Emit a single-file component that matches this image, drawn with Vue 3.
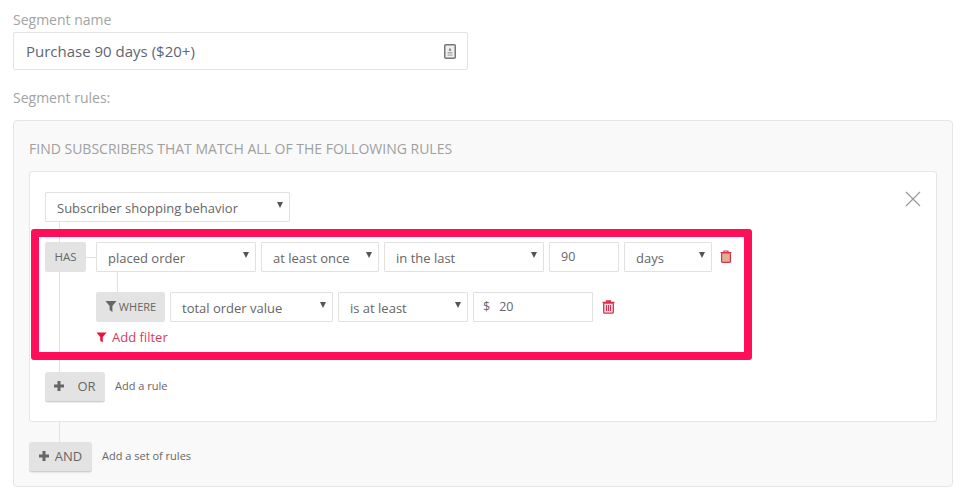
<script setup>
const ruleFields = [
  { label: 'placed order', w: 160 },
  { label: 'at least once', w: 118 },
  { label: 'in the last', w: 160 }
]
const filterFields = [
  { label: 'total order value', w: 163 },
  { label: 'is at least', w: 130 }
]
</script>

<template>
  <div class="page">
    <label class="field-label">Segment name</label>
    <div class="name-input">
      <span>Purchase 90 days ($20+)</span>
      <svg class="name-icon" width="12" height="15" viewBox="0 0 12 15">
        <rect x="0.75" y="0.75" width="10.5" height="13.5" rx="1" fill="#efefef" stroke="#777" stroke-width="1.5" />
        <path d="M6 3.6l1.4 3.2H4.6z" fill="#777" />
        <path d="M3.5 8h5v1.4h-5zM3.5 10.4h5v1.4h-5z" fill="#aaa" />
      </svg>
    </div>
    <label class="field-label rules-label">Segment rules:</label>

    <section class="panel">
      <h2 class="panel-title">FIND SUBSCRIBERS THAT MATCH ALL OF THE FOLLOWING RULES</h2>
      <div class="card">
        <svg class="close" width="16" height="16" viewBox="0 0 16 16">
          <path d="M1 1l14 14M15 1L1 15" stroke="#9a9a9a" stroke-width="1.2" fill="none" />
        </svg>
        <div class="select" style="width: 245px">
          <span>Subscriber shopping behavior</span><i class="caret"></i>
        </div>

        <div class="rule-block">
          <span class="line line-main"></span>
          <span class="line line-has"></span>
          <span class="line line-where"></span>
          <div class="row">
            <div class="tag has">HAS</div>
            <div class="fields">
              <div v-for="f in ruleFields" :key="f.label" class="select" :style="{ width: f.w + 'px' }">
                <span>{{ f.label }}</span><i class="caret"></i>
              </div>
              <div class="text-input days-num">90</div>
              <div class="select" style="width: 88px"><span>days</span><i class="caret"></i></div>
              <svg class="trash trash-a" width="12" height="13" viewBox="0 0 12 13">
                <path d="M4 2V1h4v1M0.5 2.5h11" stroke="#d9304f" stroke-width="1.2" fill="none" />
                <rect x="1.6" y="3" width="8.8" height="9.4" rx="1" fill="#e3b08f" stroke="#d9304f" stroke-width="1.2" />
              </svg>
            </div>
          </div>
          <div class="row where-row">
            <div class="tag where">
              <svg width="12" height="11" viewBox="0 0 12 11"><path d="M0.5 0h11L7.4 5v6L4.6 9V5z" fill="#666" /></svg>
              <span>WHERE</span>
            </div>
            <div class="fields">
              <div v-for="f in filterFields" :key="f.label" class="select" :style="{ width: f.w + 'px' }">
                <span>{{ f.label }}</span><i class="caret"></i>
              </div>
              <div class="text-input amount"><span class="dollar">$</span><span>20</span></div>
              <svg class="trash trash-b" width="13" height="14" viewBox="0 0 13 14">
                <path d="M4.5 2V1h4v1M0.5 2.5h12" stroke="#d9304f" stroke-width="1.3" fill="none" />
                <rect x="1.7" y="3" width="9.6" height="10.2" rx="1" fill="#f6dfe3" stroke="#d9304f" stroke-width="1.3" />
                <path d="M4.5 5v6M6.5 5v6M8.5 5v6" stroke="#d9304f" stroke-width="1.1" />
              </svg>
            </div>
          </div>
          <div class="add-filter">
            <svg width="11" height="11" viewBox="0 0 12 11"><path d="M0.5 0h11L7.4 5v6L4.6 9V5z" fill="#e0163f" /></svg>
            <span>Add filter</span>
          </div>
          <div class="highlight"></div>
        </div>

        <div class="action or-action">
          <button class="btn or-btn">
            <svg class="plus" width="10" height="10" viewBox="0 0 10 10"><path d="M3.5 0h3v3.5H10v3H6.5V10h-3V6.5H0v-3h3.5z" fill="#666" /></svg>
            <span>OR</span>
          </button>
          <span class="hint">Add a rule</span>
        </div>
      </div>

      <div class="and-wrap">
        <span class="line line-and"></span>
        <div class="action">
          <button class="btn and-btn">
            <svg class="plus" width="10" height="10" viewBox="0 0 10 10"><path d="M3.5 0h3v3.5H10v3H6.5V10h-3V6.5H0v-3h3.5z" fill="#666" /></svg>
            <span>AND</span>
          </button>
          <span class="hint">Add a set of rules</span>
        </div>
      </div>
    </section>
  </div>
</template>

<style>
html, body { margin: 0; background: #fff; }
</style>

<style scoped>
.page {
  width: 968px;
  height: 501px;
  box-sizing: border-box;
  padding: 10px 15px 0 13px;
  overflow: hidden;
  font-family: "Open Sans", sans-serif;
  color: #666;
  font-size: 13px;
  position: relative;
}
.field-label {
  display: block;
  font-size: 14px;
  line-height: 20px;
  color: #a3a3a3;
}
.name-input {
  width: 455px;
  height: 38px;
  margin-top: 2px;
  box-sizing: border-box;
  border: 1px solid #e3e3e3;
  border-radius: 2px;
  display: flex;
  align-items: center;
  justify-content: space-between;
  padding: 0 11px 0 12px;
  font-size: 15px;
  color: #5f6670;
}
.name-icon { display: block; }
.rules-label { margin-top: 18px; }
.panel {
  width: 940px;
  height: 367px;
  margin-top: 12px;
  box-sizing: border-box;
  background: #f9f9f9;
  border: 1px solid #e6e6e6;
  border-radius: 4px;
  padding: 0 15px;
}
.panel-title {
  margin: 0;
  font-size: 14px;
  font-weight: 400;
  line-height: 18px;
  padding-top: 19px;
  color: #a0a0a0;
}
.card {
  position: relative;
  margin-top: 13px;
  height: 251px;
  box-sizing: border-box;
  background: #fff;
  border: 1px solid #e6e6e6;
  border-radius: 3px;
  padding: 20px 15px 0;
}
.close { position: absolute; top: 19px; right: 15px; }
.select, .text-input {
  height: 30px;
  box-sizing: border-box;
  background: #fff;
  border: 1px solid #e1e1e1;
  border-radius: 1px;
  display: flex;
  align-items: center;
  flex: none;
  font-size: 13px;
  color: #666;
}
.select {
  justify-content: space-between;
  padding: 0 6px 0 11px;
}
.select > span { margin-top: 2px; }
.caret {
  width: 0;
  height: 0;
  border-left: 3.5px solid transparent;
  border-right: 3.5px solid transparent;
  border-top: 6px solid #555;
  margin-top: -4px;
}
.rule-block {
  position: relative;
  margin-top: 20px;
}
.row { display: flex; align-items: center; }
.fields {
  display: flex;
  align-items: center;
  gap: 5px;
}
.tag {
  height: 30px;
  padding-bottom: 2px;
  background: #e3e3e3;
  border-radius: 2px;
  display: flex;
  align-items: center;
  justify-content: center;
  flex: none;
  font-size: 11.5px;
  color: #666;
  box-sizing: border-box;
  position: relative;
}
.has { width: 41px; margin-right: 10px; }
.where-row { margin-top: 20px; margin-left: 51px; }
.where { width: 69px; margin-right: 5px; gap: 2px; font-size: 11px; }
.days-num { width: 70px; padding-left: 11px; font-size: 12.5px; padding-bottom: 1px; }
.amount { width: 120px; padding-left: 9px; font-size: 12.5px; padding-bottom: 1px; }
.dollar { margin-right: 9px; }
.trash-a { margin-left: 3px; margin-top: -2px; }
.trash-b { margin-left: 4px; margin-top: -1px; }
.add-filter {
  margin-left: 51px;
  margin-top: 5px;
  height: 20px;
  display: flex;
  align-items: center;
  gap: 5px;
  font-size: 13px;
  color: #dc3a5b;
}
.line { position: absolute; background: #e2e2e2; }
.line-main { left: 14px; top: -20px; width: 1px; height: 150px; }
.line-has { left: 41px; top: 15px; width: 10px; height: 1px; }
.line-where { left: 72px; top: 30px; width: 1px; height: 20px; }
.highlight {
  position: absolute;
  left: -14px;
  top: -13px;
  width: 721px;
  height: 131px;
  box-sizing: border-box;
  border: 8px solid #ff0f5a;
  border-radius: 3px;
  pointer-events: none;
}
.action { display: flex; align-items: center; gap: 10px; }
.or-action {
  position: relative;
  margin-top: 25px;
}
.btn {
  height: 30px;
  border: 0;
  border-bottom: 1px solid #cfcfcf;
  border-radius: 3px;
  background: #e3e3e3;
  box-shadow: 0 1px 1px rgba(0, 0, 0, 0.08);
  font-family: inherit;
  font-size: 13px;
  color: #666;
  display: flex;
  align-items: center;
  justify-content: center;
  padding: 0 0 2px;
}
.or-btn { width: 60px; gap: 13px; }
.and-btn { width: 63px; gap: 6px; }
.plus { display: block; }
.hint { font-size: 11px; color: #666; margin-bottom: 3px; }
.and-wrap { position: relative; padding-top: 20px; }
.line-and { left: 30px; top: 0; width: 1px; height: 20px; }
</style>
